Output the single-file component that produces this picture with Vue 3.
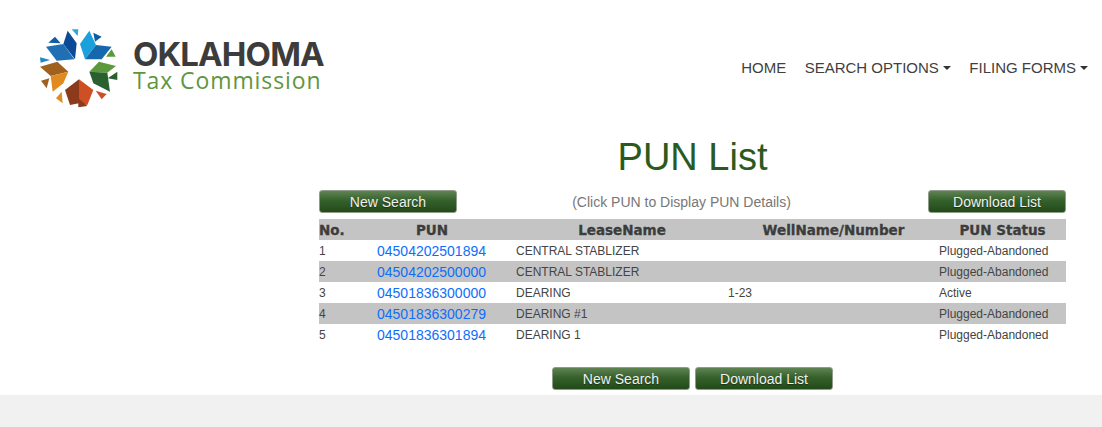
<script setup>
const rows = [
  { no: 1, pun: '04504202501894', lease: 'CENTRAL STABLIZER', well: '', status: 'Plugged-Abandoned' },
  { no: 2, pun: '04504202500000', lease: 'CENTRAL STABLIZER', well: '', status: 'Plugged-Abandoned' },
  { no: 3, pun: '04501836300000', lease: 'DEARING', well: '1-23', status: 'Active' },
  { no: 4, pun: '04501836300279', lease: 'DEARING #1', well: '', status: 'Plugged-Abandoned' },
  { no: 5, pun: '04501836301894', lease: 'DEARING 1', well: '', status: 'Plugged-Abandoned' },
]
const shapes = [
  ['#1f6fb5', '48,80 100,72 133,118 80,122'],
  ['#0a4a96', '113,32 140,70 135,118 100,72'],
  ['#1ba0dc', '150,72 178,32 198,75 165,118'],
  ['#1668ae', '198,75 245,80 215,118 165,118'],
  ['#5a9a3a', '178,155 207,125 258,138 232,158'],
  ['#2a6030', '178,155 232,158 240,215 190,190'],
  ['#8c3a1c', '105,210 147,178 147,250 120,255'],
  ['#cf4f24', '147,178 190,210 172,255 147,250'],
  ['#a0611f', '30,140 82,125 115,155 62,168'],
  ['#e08a20', '62,168 115,155 100,190 68,215'],
  ['#2aa8d8', '125,28 145,28 143,48'],
  ['#0f5ca5', '55,68 75,50 92,70'],
  ['#0f5ca5', '190,38 215,50 195,65'],
  ['#5a9a3a', '228,110 245,88 257,110'],
  ['#1f86c8', '30,112 60,120 32,128'],
  ['#2a6030', '233,175 262,155 262,180'],
  ['#a0611f', '33,182 58,175 50,205'],
  ['#e08a20', '78,235 95,215 98,250'],
  ['#cf4f24', '197,212 230,222 215,238'],
  ['#8c3a1c', '145,235 172,258 145,262'],
]
</script>

<template>
  <div class="page">
    <header class="header">
      <div class="logo">
        <svg class="mark" viewBox="0 0 300 285" width="100" height="95" aria-hidden="true">
          <polygon v-for="(s, i) in shapes" :key="i" :points="s[1]" :fill="s[0]" />
        </svg>
        <div class="wordmark">
          <div class="state">OKLAHOMA</div>
          <div class="agency">Tax Commission</div>
        </div>
      </div>
      <nav class="nav">
        <a>HOME</a>
        <a class="caret">SEARCH OPTIONS</a>
        <a class="caret">FILING FORMS</a>
      </nav>
    </header>

    <main class="content">
      <h1>PUN List</h1>
      <div class="actions">
        <button>New Search</button>
        <span class="note">(Click PUN to Display PUN Details)</span>
        <button>Download List</button>
      </div>
      <table>
        <colgroup>
          <col class="c-no" /><col class="c-pun" /><col class="c-lease" /><col class="c-well" /><col class="c-status" />
        </colgroup>
        <thead>
          <tr>
            <th class="left">No.</th>
            <th class="head-pun">PUN</th>
            <th>LeaseName</th>
            <th>WellName/Number</th>
            <th>PUN Status</th>
          </tr>
        </thead>
        <tbody>
          <tr v-for="r in rows" :key="r.no">
            <td>{{ r.no }}</td>
            <td class="pun"><a class="link">{{ r.pun }}</a></td>
            <td>{{ r.lease }}</td>
            <td>{{ r.well }}</td>
            <td>{{ r.status }}</td>
          </tr>
        </tbody>
      </table>
      <div class="bottom">
        <button>New Search</button>
        <button>Download List</button>
      </div>
    </main>
    <footer class="footer"></footer>
  </div>
</template>

<style>
html, body { margin: 0; background: #fff; }
</style>

<style scoped>
.page {
  width: 1102px;
  height: 427px;
  overflow: hidden;
  font-family: "Liberation Sans", Arial, sans-serif;
  display: flex;
  flex-direction: column;
}
.header {
  height: 134px;
  flex: none;
  display: flex;
  justify-content: space-between;
  align-items: flex-start;
  box-sizing: border-box;
  padding: 20px 14px 0 30px;
}
.logo { display: flex; align-items: flex-start; }
.mark { display: block; }
.wordmark { margin-left: 3px; padding-top: 19px; }
.state {
  font-family: Inter, sans-serif;
  font-weight: 700;
  font-size: 33px;
  line-height: 30px;
  color: #3c3c3c;
  letter-spacing: -0.9px;
}
.agency {
  font-family: "Open Sans", sans-serif;
  font-weight: 500;
  font-size: 23px;
  line-height: 22px;
  color: #5e9640;
  letter-spacing: 0.9px;
}
.nav {
  display: flex;
  gap: 18.5px;
  padding-top: 39px;
  font-size: 15px;
  line-height: 18px;
  color: #3f3f3f;
}
.caret::after {
  content: "";
  display: inline-block;
  margin-left: 4px;
  vertical-align: 3px;
  border-top: 4px solid #333;
  border-left: 4px solid transparent;
  border-right: 4px solid transparent;
}
.content {
  margin-left: 319px;
  width: 747px;
  flex: 1;
}
h1 {
  margin: 0;
  text-align: center;
  font-weight: 400;
  font-size: 38px;
  line-height: 46px;
  color: #2a5a1e;
}
.actions {
  display: flex;
  justify-content: space-between;
  align-items: center;
  margin-top: 10px;
}
.note {
  font-size: 14px;
  color: #777;
  margin-right: 22px;
}
button {
  width: 138px;
  height: 23px;
  padding: 0;
  border: 1px solid #8f9c8a;
  border-radius: 3px;
  background: linear-gradient(#5f8353, #35612b 45%, #234a1a);
  color: #f0f0f0;
  font: 14px/1 "Liberation Sans", Arial, sans-serif;
  text-shadow: 0 1px 1px rgba(0, 0, 0, 0.4);
}
table {
  width: 747px;
  margin-top: 6px;
  border-collapse: collapse;
  table-layout: fixed;
}
.c-no { width: 58px; }
.c-pun { width: 139px; }
.c-lease { width: 212px; }
.c-well { width: 211px; }
.c-status { width: 127px; }
th {
  height: 21px;
  padding: 0;
  background: #c4c4c4;
  color: #3c3c3c;
  font-family: "DejaVu Sans", sans-serif;
  font-weight: 700;
  font-size: 13.5px;
  -webkit-text-stroke: 0.3px #3c3c3c;
  text-align: center;
}
th.left { text-align: left; }
th.head-pun { padding-right: 29px; }
td {
  height: 21px;
  padding: 0;
  font-size: 12px;
  color: #444;
}
tbody tr:nth-child(even) td { background: #c4c4c4; }
td.pun { font-size: 14px; }
.link { color: #0d6efd; }
.bottom {
  display: flex;
  justify-content: center;
  gap: 5px;
  margin-top: 22px;
}
.footer {
  height: 32px;
  flex: none;
  background: #f1f1f1;
}
</style>
